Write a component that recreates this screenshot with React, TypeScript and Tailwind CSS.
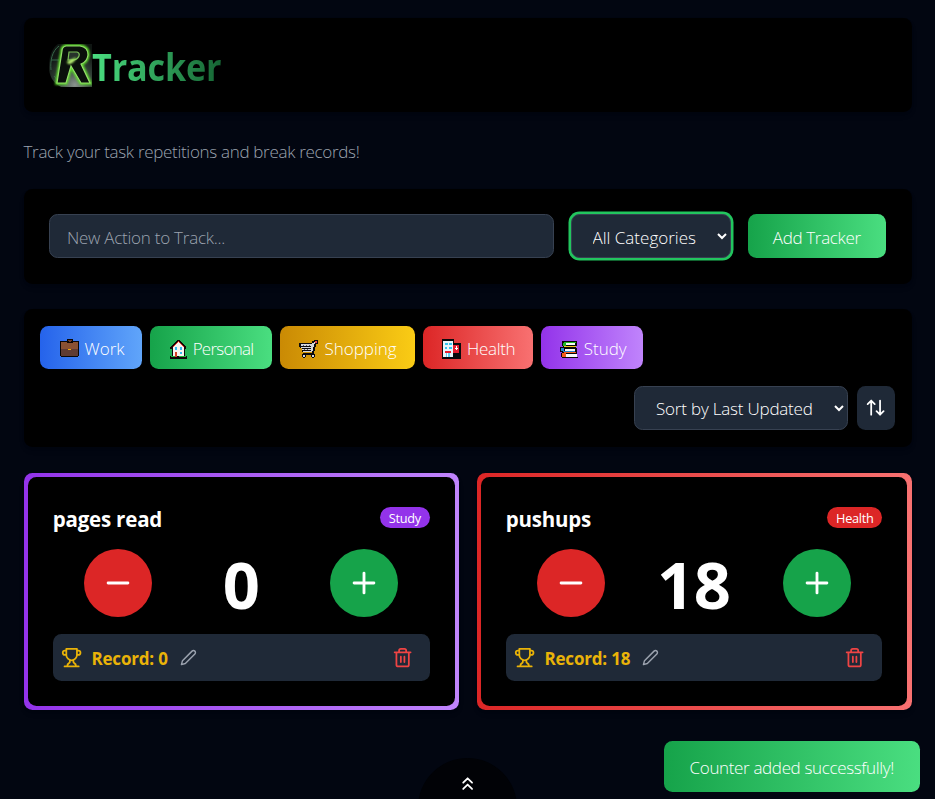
import type { ReactNode } from "react";

function Icon({ size, children, className = "" }: { size: number; children: ReactNode; className?: string }) {
  return (
    <svg width={size} height={size} viewBox="0 0 24 24" fill="none" stroke="currentColor" strokeWidth="2" strokeLinecap="round" strokeLinejoin="round" className={`shrink-0 ${className}`}>
      {children}
    </svg>
  );
}

function Briefcase() {
  return (
    <svg width="19" height="19" viewBox="0 0 19 19" shapeRendering="crispEdges" className="mt-[1px] ml-[1px] shrink-0">
      <path d="M7 0h6v2h6v15h-1v1H1v-1H0V2h7z" fill="#0b0706" />
      <path d="M8 1h4v1h-1v1H9V2H8z" fill="#6b3b25" />
      <path d="M1 3h6v1h6V3h5v7H1z" fill="#8a5132" />
      <path d="M1 10h17v7H1z" fill="#5f3b32" />
      <path d="M8 10h3v1H8z" fill="#f2a90a" />
    </svg>
  );
}

function House() {
  return (
    <svg width="17" height="19" viewBox="0 0 17 19" shapeRendering="crispEdges" className="mt-[2px] shrink-0">
      <path d="M7 0h3v1h1v1h1v1h1v1h1v1h1v1h1v3h-1v7h2v3H0v-3h2V9H0V7h1V6h1V5h1V4h1V3h1V2h1V1h1z" fill="#100808" />
      <path d="M8 2h1v1h1v1h1v1h1v1h1v1h1v9H3V7h1V6h1V5h1V4h1V3h1z" fill="#f7f4f0" />
      <path d="M8 1h1v1h1v1h1v1h1v1h1v1h1v1h-1V6h-1V5h-1V4h-1V3H9V2H8v1H7v1H6v1H5v1H4v1H3V6h1V5h1V4h1V3h1V2h1z" fill="#e53322" />
      <path d="M5 7h2v3H5zM10 7h2v3h-2zM10 12h2v2h-2z" fill="#36bdf0" />
      <path d="M5 12h2v5H5z" fill="#d94225" />
      <path d="M1 16h4v1H1zM9 16h7v1H9z" fill="#20b43a" />
    </svg>
  );
}

function Cart() {
  return (
    <svg width="19" height="19" viewBox="0 0 19 19" shapeRendering="crispEdges" className="mt-[2px] shrink-0">
      <path d="M15 0h4v4h-2v3h-1v4h-1v3h1v3h-1v1h-2v-1h-1v-2H7v2H6v1H4v-1H3v-3h1v-1h9v-1H3V8H1V7H0V3h13V1h2z" fill="#0c0b0d" />
      <path d="M16 1h2v2h-2z" fill="#ef4652" />
      <path d="M15 2h1v2h-1v3h-1v4h-1v1H4v-1h8v-1H3V9h9V8H2V7h10V6H2V4h11V3h2zM4 15h2v2H4zM13 15h2v2h-2z" fill="#d5d7dc" />
      <path d="M4 5h1v1H4zM7 5h1v1H7zM10 5h1v1h-1zM5 9h1v1H5zM8 9h1v1H8z" fill="#565860" />
    </svg>
  );
}

function Hospital() {
  return (
    <svg width="19" height="20" viewBox="0 0 19 20" shapeRendering="crispEdges" className="mt-[1px] shrink-0">
      <path d="M0 0h12v4h7v16H0z" fill="#08090b" />
      <path d="M1 2h10v16H1z" fill="#e9f4fa" />
      <path d="M3 4h3v2H3zM7 4h3v2H7zM3 8h2v2H3zM7 8h3v2H7z" fill="#38c4f0" />
      <path d="M3 12h6v2H3zM12 6h5v8h-6V6z" fill="#e61e30" />
      <path d="M13 9h3v1h-3zM14 7h1v4h-1z" fill="#fff" />
      <path d="M4 14h4v4H4z" fill="#62d5f4" />
      <path d="M5 14h1v4H5z" fill="#fff" />
    </svg>
  );
}

function Books() {
  return (
    <svg width="18" height="18" viewBox="0 0 18 18" shapeRendering="crispEdges" className="mt-[3px] shrink-0">
      <path d="M2 0h15v5h-1v2h1v9h1v1H2v-1H1v-4h1v-1H0V6h3V5H2z" fill="#080908" />
      <path d="M3 2h3v3H3zM4 1h12v1H4z" fill="#22b626" />
      <path d="M6 2h9v2H6zM5 8h10v2H5zM6 13h11v3H6z" fill="#f8fafb" />
      <path d="M4 5h12v1H4z" fill="#f3c51e" />
      <path d="M1 7h3v3H1zM3 10h12v1H3z" fill="#2384cf" />
      <path d="M2 12h4v4H2zM4 11h12v1H4z" fill="#f45c1b" />
    </svg>
  );
}

function Logo() {
  return (
    <svg width="43" height="43" viewBox="0 0 43 43" className="mt-[1px] shrink-0">
      <defs>
        <radialGradient id="glow" cx="60%" cy="95%" r="80%">
          <stop offset="0" stopColor="#8a938e" />
          <stop offset=".45" stopColor="#3a4a40" />
          <stop offset="1" stopColor="#0f1512" />
        </radialGradient>
        <filter id="soft" x="-20%" y="-20%" width="140%" height="140%">
          <feGaussianBlur stdDeviation="0.9" />
        </filter>
      </defs>
      <path d="M9 0H43V43H12C4 39 0 32 0 23C0 12 3 4 9 0Z" fill="url(#glow)" />
      <path d="M10 2C3 7 1 17 2 26M2 16h8M5 32l5 6" stroke="#37684a" fill="none" />
      <path d="M17 2H31Q39 3 39 11Q38 18 32 20L41 39H32L22 22L17 39H8L13 7Q13 3 17 2Z" stroke="#5fe02c" strokeWidth="3.4" fill="none" filter="url(#soft)" />
      <path d="M17 2H31Q39 3 39 11Q38 18 32 20L41 39H32L22 22L17 39H8L13 7Q13 3 17 2Z" stroke="#93dd6a" strokeWidth="1.2" fill="#0a100b" />
      <path d="M20 8H28Q31 9 30 12Q29 15 25 16H19Z" stroke="#79bd57" strokeWidth="1.2" fill="#27332b" />
      <path d="M18 18l4-2 5-2-3 4-4 2z" fill="#d8ff8a" stroke="#9bf05a" filter="url(#soft)" />
    </svg>
  );
}

const categories = [
  { name: "Work", icon: <Briefcase />, style: "w-[101.5px] from-[#2563eb] to-[#60a5fa]", label: "w-[40px]" },
  { name: "Personal", icon: <House />, style: "w-[121.5px] from-[#16a34a] to-[#4ade80]", label: "w-[61px] tracking-[-0.75px]" },
  { name: "Shopping", icon: <Cart />, style: "w-[134.5px] from-[#ca8a04] to-[#facc15]", label: "w-[73px]" },
  { name: "Health", icon: <Hospital />, style: "w-[109.5px] from-[#dc2626] to-[#f87171]", label: "w-[48px] tracking-[-0.3px]" },
  { name: "Study", icon: <Books />, style: "w-[102px] from-[#9333ea] to-[#c084fc]", label: "w-[42px]" },
];

interface CounterProps {
  title: string;
  tag: string;
  value: number;
  frame: string;
  pill: string;
}

function CounterCard({ title, tag, value, frame, pill }: CounterProps) {
  return (
    <article className={`h-[237.5px] rounded-[8.5px] bg-linear-to-r/srgb p-[4.25px] shadow-md ${frame}`}>
      <div className="h-full rounded-[8.5px] bg-black px-[25px] pt-[24.75px]">
        <div className="flex h-[34px] items-center justify-between">
          <h2 className="pt-[1px] text-[20.5px] font-bold tracking-[-0.2px]">{title}</h2>
          <span className={`mb-[3px] flex h-[21.5px] items-center justify-center rounded-full pt-[2px] text-[12.75px] font-normal tracking-[-0.3px] ${pill}`}>{tag}</span>
        </div>
        <div className="mt-[13px] flex items-center justify-between pr-[31.5px] pl-[31px]">
          <button className="flex size-[68px] items-center justify-center rounded-full bg-[#dc2626]">
            <Icon size={34}><path d="M5 12h14" /></Icon>
          </button>
          <span className="pt-[3px] text-[65px] leading-[65px] font-bold tracking-[-0.5px]">{value}</span>
          <button className="flex size-[68px] items-center justify-center rounded-full bg-[#16a34a]">
            <Icon size={34}><path d="M5 12h14M12 5v14" /></Icon>
          </button>
        </div>
        <div className="mt-[17px] flex h-[47px] items-center rounded-[8.5px] bg-[#1f2937] pr-[17px] pl-[8.5px]">
          <Icon size={21.25} className="text-[#eab308]">
            <path d="M6 9H4.5a2.5 2.5 0 0 1 0-5H6M18 9h1.5a2.5 2.5 0 0 0 0-5H18M4 22h16M10 14.66V17c0 .55-.47.98-.97 1.21C7.85 18.75 7 20.24 7 22M14 14.66V17c0 .55.47.98.97 1.21C16.15 18.75 17 20.24 17 22M18 2H6v7a6 6 0 0 0 12 0V2Z" />
          </Icon>
          <span className="ml-[9px] pt-[2px] text-[17px] font-bold tracking-[-0.2px] text-[#eab308]">Record: {value}</span>
          <Icon size={17} className="ml-[12px] text-[#9ca3af]">
            <path d="M17 3a2.828 2.828 0 1 1 4 4L7.5 20.5 2 22l1.5-5.5L17 3z" />
          </Icon>
          <Icon size={21.25} className="ml-auto text-[#ef4444]">
            <path d="M3 6h18M19 6v14a2 2 0 0 1-2 2H7a2 2 0 0 1-2-2V6M8 6V4a2 2 0 0 1 2-2h4a2 2 0 0 1 2 2v2M10 11v6M14 11v6" />
          </Icon>
        </div>
      </div>
    </article>
  );
}

export default function App() {
  return (
    <div className="relative h-[799px] overflow-hidden bg-[#020611] px-[23.5px] pt-[18px] font-['Open_Sans','Noto_Sans',sans-serif] text-[17px] leading-[25.5px] font-[350] text-white">
      <header className="flex h-[93.5px] items-center rounded-[8.5px] bg-black px-[25.5px] shadow-md">
        <Logo />
        <h1 className="origin-left scale-x-[0.895] bg-linear-to-r/srgb from-[#4ade80] to-[#166534] bg-clip-text pt-[3px] text-[38.25px] leading-[48px] font-bold tracking-[-0.2px] text-transparent">Tracker</h1>
      </header>
      <p className="mt-[27px] h-[50px] tracking-[-0.31px] text-[#9ca3af]">Track your task repetitions and break records!</p>
      <section className="flex h-[95px] items-center gap-[17px] rounded-[8.5px] bg-black px-[25.5px] shadow-md">
        <input placeholder="New Action to Track..." className="h-[44.5px] min-w-0 flex-1 rounded-[8.5px] border border-[#374151] bg-[#1f2937] px-[17px] pt-[2px] tracking-[-0.25px] placeholder:text-[#9ca3af] placeholder:opacity-100" />
        <select className="h-[44.5px] w-[160px] rounded-[8.5px] border border-[#374151] bg-[#1f2937] pt-[2px] pl-[17px] ring-[2.5px] ring-[#22c55e]">
          <option>All Categories</option>
        </select>
        <button className="h-[44.5px] w-[138.5px] rounded-[8.5px] bg-linear-to-r/srgb from-[#16a34a] to-[#4ade80] pt-[3px] tracking-[-0.35px]">Add Tracker</button>
      </section>
      <section className="mt-[25px] h-[138px] rounded-[8.5px] bg-black pt-[17.5px] pr-[17px] pl-[16.75px] shadow-md">
        <div className="flex gap-[8.5px]">
          {categories.map((c) => (
            <button key={c.name} className={`flex h-[42.5px] items-center justify-center gap-[6px] rounded-[8.5px] bg-linear-to-r/srgb pt-[2px] pl-[1px] ${c.style}`}>
              {c.icon}
              <span className={`pt-[1px] whitespace-nowrap ${c.label}`}>{c.name}</span>
            </button>
          ))}
        </div>
        <div className="mt-[17px] flex justify-end gap-[8.5px]">
          <select className="h-[44.5px] w-[214px] rounded-[8.5px] border border-[#374151] bg-[#1f2937] pt-[2px] pl-[17px] tracking-[-0.2px]">
            <option>Sort by Last Updated</option>
          </select>
          <button className="flex h-[44.5px] w-[38px] items-center justify-center rounded-[8.5px] bg-[#1f2937]">
            <Icon size={21.25}><path d="m21 16-4 4-4-4M17 20V4M3 8l4-4 4 4M7 4v16" /></Icon>
          </button>
        </div>
      </section>
      <main className="mt-[26.25px] grid grid-cols-2 gap-[17px]">
        <CounterCard title="pages read" tag="Study" value={0} frame="from-[#9333ea] to-[#c084fc]" pill="bg-[#9333ea] w-[50px]" />
        <CounterCard title="pushups" tag="Health" value={18} frame="from-[#dc2626] to-[#f87171] ml-[0.5px]" pill="bg-[#dc2626] w-[55px]" />
      </main>
      <button className="absolute top-[758px] left-[418px] flex size-[99px] justify-center rounded-full bg-[#010206] pt-[15px]">
        <Icon size={21.25}><path d="m17 11-5-5-5 5M17 18l-5-5-5 5" /></Icon>
      </button>
      <div className="absolute right-[15px] bottom-[7px] flex h-[51px] w-[256.5px] items-center justify-center rounded-[8.5px] bg-linear-to-r/srgb from-[#16a34a] to-[#4ade80] pt-[3px] tracking-[-0.35px]">Counter added successfully!</div>
    </div>
  );
}
